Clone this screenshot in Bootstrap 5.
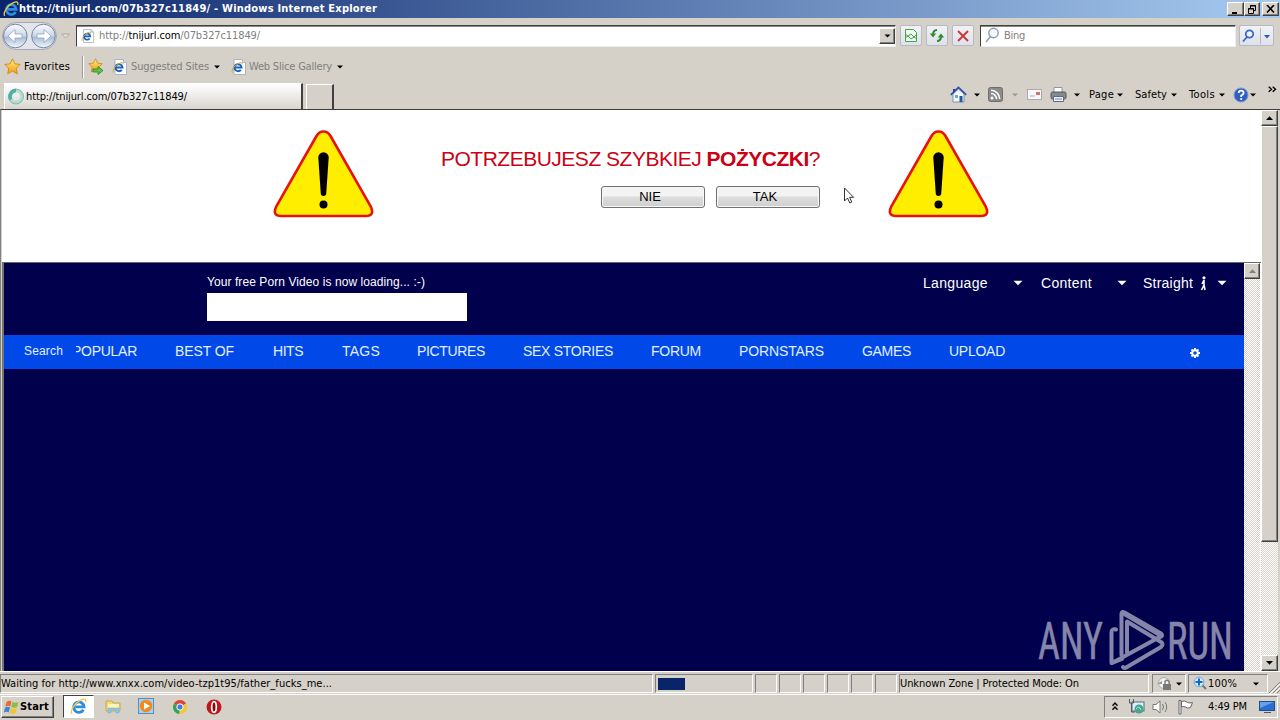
<!DOCTYPE html>
<html lang="en">
<head>
<meta charset="utf-8">
<title>Windows Internet Explorer</title>
<link href="https://cdn.jsdelivr.net/npm/bootstrap@5.3.0/dist/css/bootstrap.min.css" rel="stylesheet">
<style>
:root{--face:#d5d0c8;--dark:#808080;--navy:#00004c}
body{width:1280px;height:720px;overflow:hidden;background:var(--face);font:11px/14px "DejaVu Sans Condensed","DejaVu Sans",sans-serif;font-stretch:condensed;color:#000}
svg{display:block;flex:none}
.strip{display:grid;align-items:center;white-space:nowrap}
.strip>*{min-width:0}
.fit{white-space:nowrap;display:inline-block;justify-self:start}
.titlebar{height:18px;background:linear-gradient(90deg,#0a246a,#a6caf0);grid-template-columns:3px 16px 1208px 17px 16px 2px 17px;color:#fff;font-weight:700}
.raised{background:var(--face);border:1px solid;border-color:#fff #404040 #404040 #fff;box-shadow:inset -1px -1px 0 var(--dark)}
.sunk{border:1px solid;border-color:var(--dark) #fff #fff var(--dark)}
.winbtn{height:14px;display:flex;align-items:center;justify-content:center}
.address{height:35px;grid-template-columns:2px 55px 4px 10px 5px 820px 4px 22px 4px 22px 4px 22px 6px 256px 3px 35px}
.field{height:22px;background:#fff;border:1px solid;border-color:#404040 #eee #eee #404040;box-shadow:inset 0 1px #888}
.drop{width:16px}
.toolbtn{height:21px;border:1px solid #b5bac6;border-radius:2px;background:linear-gradient(#f1f2f6,#dfe1ea);display:flex;align-items:center;justify-content:center}
.grey{color:#808080}
.favs{height:27px;grid-template-columns:4px 20px 58px 6px 16px 8px 19px 83px 17px 18px 88px 14px}
.tabs-row{height:29px;grid-template-columns:4px 299px 3px 28px 616px 17px 7px 8px 6px 15px 9px 6px 9px 15px 8px 17px 7px 8px 7px 191px}
.tab-on{height:26px;align-self:end;background:linear-gradient(#fff,#d9d5ce);border:1px solid #fff;border-right:2px solid #404040;border-bottom:0;padding:0 3px}
.tab-on svg{margin-right:1px}
.tab-new{height:25px;align-self:end;border:1px solid #fff;border-right:2px solid #404040;border-bottom:0}
.commands{display:grid;grid-template-columns:28px 18px 36px 18px 30px 14px 17px 18px 10px;align-items:center}
.more{align-self:start;margin-top:-1px}
.viewport{height:562px;border-left:1px solid var(--dark);border-top:1px solid #3f3d39;padding-left:1px}
.banner{height:152px;padding:20px 0 0 271px}
.ask{width:380px;margin:19px 67px 0 67px}
.ask h1{font:21px/24px "Liberation Sans",Arial,sans-serif;color:#cc0013;height:24px;margin:-2px 0 15px;white-space:nowrap}
.answers{gap:11px;margin-right:1px}
.answer{width:104px;height:22px;border:1px solid #707070;border-radius:3px;background:linear-gradient(#f3f3f3 0 45%,#dddddd 50%,#cfcfcf);box-shadow:inset 0 0 0 1px #f7f7f7;font:13px/20px "Liberation Sans",Arial,sans-serif;color:#000;text-align:center;padding:0 6px 0 0}
.frame{height:409px;border-top:1px solid #69696c;border-left:2px solid #747474;background:#fff;font-family:"Liberation Sans",Arial,sans-serif;color:#fff}
.site{width:1240px;height:408px;background:var(--navy);font-size:14px;line-height:18px}
.site-head{height:72px}
.site-head .load{margin-left:203px;width:260px;padding-top:10px;font-size:12px}
.input-box{height:28px;margin-top:2px;background:#fff}
.prefs{margin-left:456px;padding-top:11px;display:grid;grid-template-columns:90px 28px 76px 26px 57px 17px 12px;height:29px;align-items:center;white-space:nowrap}
.site-nav{height:34px;padding-bottom:2px;background:#0049e8;display:grid;align-items:center;grid-template-columns:20px 52px 99px 98px 69px 75px 106px 128px 88px 123px 87px 241px 12px;white-space:nowrap;color:#e2f0ff}
.site-nav svg{margin-top:3px}
.site-nav .small-label{font-size:12px}
.clip{overflow:hidden}.clip .fit{margin-left:-4px}
.track{width:16px;background:repeating-conic-gradient(#fff 0 25%,#d8d4cd 0 50%) 0 0/2px 2px}
.outer-track{width:17px}
.sbtn{height:16px;display:flex;align-items:center;justify-content:center}
.thumb{height:416px}
.edge{width:2px}
.status{height:23px;border-top:1px solid #fff;padding-top:2px;grid-template-columns:653px 2px 98px 2px 22px 2px 22px 2px 22px 2px 22px 2px 22px 2px 22px 2px 250px 3px 34px 2px 80px 12px;align-items:start}
.status .sunk{height:19px;display:flex;align-items:center}
.block{width:27px;height:12px;background:#0a246a;margin-left:2px}
.taskbar{height:26px;border-top:1px solid #fff;padding-bottom:2px;grid-template-columns:1px 53px 9px 31px 11px 17px 16px 17px 17px 17px 17px 17px 881px 174px}
.start{height:22px;display:flex;align-items:center;font-weight:700;padding-left:2px}
.active-app{height:23px;background:#fff;border:1px solid;border-color:#404040 #fff #fff #404040;display:flex;align-items:center;justify-content:center}
.tray{height:22px;display:grid;align-items:center;grid-template-columns:7px 16px 24px 25px 31px 51px 18px}
.pointer{position:absolute;left:843px;top:187px}
.watermark{position:absolute;left:1036px;top:607px}
</style>
</head>
<body>
<svg width="0" height="0" class="position-absolute">
 <defs>
  <linearGradient id="orb" x2="0" y2="1"><stop stop-color="#fafcff"/><stop offset=".5" stop-color="#cbd6e8"/><stop offset=".55" stop-color="#a9bcd6"/><stop offset="1" stop-color="#f1f8ff"/></linearGradient>
  <linearGradient id="gold" x2="0" y2="1"><stop stop-color="#fff08a"/><stop offset="1" stop-color="#f09a10"/></linearGradient>
  <symbol id="e" viewBox="0 0 16 16"><path d="M12.600 11A4.900 4.900 0 1 1 13.200 8.300H5" fill="none" stroke="#2f8de0" stroke-width="2.700"/><path d="M1.700 14.800C-.5 12 5 4 10.500 1.700C14 .2 15.500 1 14.600 4" fill="none" stroke="#f3c944" stroke-width="1.300"/></symbol>
  <symbol id="pg" viewBox="0 0 16 16"><path d="M3 .5h8.500l3 3v12H3z" fill="#fff" stroke="#a8b4c8"/><path d="M11.500.5v3h3" fill="#dce6f4" stroke="#a8b4c8"/><path d="M9.800 10.800a3.500 3.500 0 1 1 .7-2.300H3.500" fill="none" stroke="#1b62bd" stroke-width="2"/><path d="M1.200 13.500C.2 11 4 5.500 9 3.800c2-.5 2.500.2 2 1.600" fill="none" stroke="#dca72a"/></symbol>
  <symbol id="star" viewBox="0 0 16 16"><path d="M8 .8l2.200 4.700 5.100.6-3.800 3.500 1 5.300L8 12.300l-4.500 2.600 1-5.300L.7 6.100l5.100-.6z" fill="url(#gold)" stroke="#d98a12" stroke-width=".9"/></symbol>
  <symbol id="dn" viewBox="0 0 6 4"><path d="M0 .5h6L3 3.500z"/></symbol>
  <symbol id="warn" viewBox="0 0 100 88"><path d="M50 1.500q4.500 0 7 4.500l40 70q5 10-5 10H8q-10 0-5-10L43 6q2.500-4.500 7-4.500z" fill="#fe0" stroke="#e8120c" stroke-width="2.600"/><path d="M44.800 27.500a5.200 5.200 0 0 1 10.400 0L52.700 64q-.2 2-2.700 2t-2.700-2z"/><circle cx="50" cy="74.500" r="4"/></symbol>
 </defs>
</svg>

<header class="strip titlebar"><i></i><svg width="16" height="16"><use href="#e"/></svg><span><span class="fit" data-w="358">http://tnijurl.com/07b327c11849/ - Windows Internet Explorer</span></span>
 <b class="raised winbtn"><svg width="9" height="9"><path d="M1 7h5v2H1z"/></svg></b>
 <b class="raised winbtn"><svg width="10" height="9" fill="none" stroke="#000"><path d="M3.500 3V.5h5v5H6.500M3 1h6M1.500 3.500h5v5h-5zM1 4h6"/></svg></b><i></i>
 <b class="raised winbtn"><svg width="9" height="8" stroke="#000" stroke-width="1.600"><path d="M1 0l7 7.500M8 0L1 7.500"/></svg></b>
</header>

<section class="strip address"><i></i>
 <svg width="55" height="28"><rect x=".5" y=".5" width="54" height="27" rx="13.500" fill="#e4e4ec" stroke="#a7a7b7"/><g stroke="#76859d"><circle cx="13.300" cy="14" r="11.800" fill="url(#orb)"/><circle cx="41.500" cy="14" r="11.800" fill="url(#orb)"/></g><g fill="#fff" stroke="#8fa3c0" stroke-width=".8"><path d="M6 14l7-6.500V12h7v4h-7v4.500z"/><path d="M49 14l-7-6.500V12h-7v4h7v4.500z"/></g></svg><i></i>
 <svg width="9" height="6"><path d="M.5 1h8l-4 4z" fill="#e5e2dc" stroke="#aaa6a0"/></svg><i></i>
 <div class="field d-flex align-items-center ps-1"><svg width="14" height="16"><use href="#pg"/></svg><span class="fit grey ms-1" data-w="161">http://<span class="text-black">tnijurl.com</span>/07b327c11849/</span><span class="raised ms-auto sbtn drop"><svg width="7" height="4"><use href="#dn"/></svg></span></div><i></i>
 <span class="toolbtn"><svg width="14" height="15" fill="#eefaee" stroke="#49a04c"><path d="M1.500 1.500h8l3 3v9h-11z"/><path d="M1 6l3 2 3-2 3 3 3-3M1 10l3-2 3 3 3-2 3 2" fill="none"/></svg></span><i></i>
 <span class="toolbtn"><svg width="16" height="14" fill="none" stroke="#2f8a30" stroke-width="2"><path d="M8 1Q4 1 4 6M8 12q4 0 4-5"/><path d="M.8 4.500h6.400L4 8.500zM8.800 8.500h6.400L12 4.500z" fill="#2f8a30" stroke="none"/></svg></span><i></i>
 <span class="toolbtn"><svg width="12" height="12" stroke="#c93c3c" stroke-width="2"><path d="M1 1l10 10M11 1L1 11"/></svg></span><i></i>
 <div class="field d-flex align-items-center ps-1"><svg width="15" height="17" fill="#f4f8fc" stroke="#8c9bad" stroke-width="1.400"><path d="M5.500 9.500L1 15"/><circle cx="8.500" cy="6" r="4.700"/></svg><span class="fit grey ms-1" data-w="21">Bing</span></div><i></i>
 <span class="toolbtn justify-content-start"><svg width="32" height="16"><g fill="#eef4ff" stroke="#3567c8" stroke-width="1.800"><path d="M7 9l-4 4.500"/><circle cx="9.500" cy="6" r="3.700"/></g><path d="M20.500-2v20" stroke="#b5bac6"/><path d="M24 7h6l-3 3.500z" fill="#2a5ab0"/></svg></span>
</section>

<section class="strip favs"><i></i><svg width="17" height="17"><use href="#star"/></svg><span><span class="fit" data-w="46">Favorites</span></span>
 <svg width="4" height="22"><path d="M.5 0v22" stroke="#999"/><path d="M1.500 0v22" stroke="#fff"/></svg>
 <svg width="17" height="17"><use href="#star" width="15" height="15"/><path d="M5 11h5V8.500l5 4-5 4V14H5z" fill="#5cc33f" stroke="#26852a" stroke-width=".8"/></svg><i></i>
 <svg width="16" height="16"><use href="#pg"/></svg><span class="grey"><span class="fit" data-w="78">Suggested Sites</span></span><svg width="6" height="4"><use href="#dn"/></svg><svg width="16" height="16"><use href="#pg"/></svg><span class="grey"><span class="fit" data-w="83">Web Slice Gallery</span></span><svg width="6" height="4"><use href="#dn"/></svg>
</section>

<section class="strip tabs-row"><i></i>
 <div class="tab-on d-flex align-items-center"><svg width="17" height="17" fill="none" stroke-width="3.500"><circle cx="8" cy="8.500" r="6" stroke="#b2ddd5"/><path d="M8 2.500a6 6 0 0 0-5 9" stroke="#49b3a2"/><circle cx="8" cy="8.500" r="7.500" stroke="#5f9e97" stroke-width=".6"/></svg><span class="fit" data-w="161">http://tnijurl.com/07b327c11849/</span></div><i></i>
 <div class="tab-new"></div><i></i>
 <svg width="17" height="17"><path d="M3 3h2v3H3z" fill="#253d8f"/><path d="M3 8l5.500-5L14 8v8H3z" fill="#f4f8ff" stroke="#7a90bb"/><path d="M.8 8.800L8.500 1.500l7.700 7.300" fill="none" stroke="#304fa8" stroke-width="1.700"/><path d="M5 9h3v3H5z" fill="#62aada"/><path d="M9.500 10h3v6h-3z" fill="#285a91"/></svg><i></i><svg width="6" height="4"><use href="#dn"/></svg><i></i>
 <svg width="15" height="15"><rect x=".5" y=".5" width="14" height="14" rx="2" fill="#8b8b8b" stroke="#6d6d6d"/><circle cx="4" cy="11" r="1.500" fill="#fff"/><path d="M3 6.500a5.500 5.500 0 0 1 5.500 5.500M3 3.300A8.700 8.700 0 0 1 11.700 12" fill="none" stroke="#fff" stroke-width="1.500"/></svg><i></i><svg width="6" height="4" fill="#999"><use href="#dn"/></svg><i></i>
 <svg width="15" height="12"><rect x=".5" y=".5" width="14" height="10" fill="#f8f8fc" stroke="#aaa"/><path d="M9 3h4v3H9z" fill="#c76"/><path d="M3 7h5" stroke="#aab"/></svg><i></i>
 <svg width="17" height="16"><path d="M4 5V.5h8V5" fill="#fff" stroke="#8a96a9"/><rect x="1" y="5" width="15" height="7" rx="1.500" fill="#84898f" stroke="#54585f"/><path d="M3.500 9.500h10v5h-10z" fill="#eef4fc" stroke="#667"/><path d="M5 12h7" stroke="#5889cf"/></svg><i></i><svg width="6" height="4"><use href="#dn"/></svg><i></i>
 <div class="commands"><span class="fit" data-w="25">Page</span><svg width="6" height="4"><use href="#dn"/></svg><span class="fit" data-w="32">Safety</span><svg width="6" height="4"><use href="#dn"/></svg><span class="fit" data-w="26">Tools</span><svg width="6" height="4"><use href="#dn"/></svg><svg width="16" height="16"><circle cx="8" cy="8" r="7" fill="#2f5fc0" stroke="#8199ce"/><path d="M5.500 6Q6 3.500 8.200 3.600T10.700 6Q10.500 7.300 8.200 8.500V10" fill="none" stroke="#fff" stroke-width="1.700"/><circle cx="8.200" cy="12" r="1.100" fill="#fff"/></svg><svg width="6" height="4"><use href="#dn"/></svg><svg class="more" width="9" height="7" fill="none" stroke="#000" stroke-width="1.400"><path d="M.7.7l2.800 2.500L.7 5.700M4.700.7l2.800 2.500-2.800 2.500"/></svg></div>
</section>

<main class="viewport d-flex">
 <div class="bg-white flex-grow-1">
  <section class="banner d-flex align-items-start">
   <svg width="101" height="88"><use href="#warn"/></svg>
   <div class="ask"><h1><span class="fit" data-w="379">POTRZEBUJESZ SZYBKIEJ <b>POŻYCZKI</b>?</span></h1><div class="answers d-flex justify-content-end"><button class="answer">NIE</button><button class="answer">TAK</button></div></div>
   <svg width="101" height="88"><use href="#warn"/></svg>
  </section>
  <section class="frame d-flex">
   <div class="site">
    <div class="site-head d-flex"><div class="load"><span class="fit" data-w="218">Your free Porn Video is now loading... :-)</span><div class="input-box"></div></div>
     <div class="prefs"><span class="fit" data-w="65">Language</span><svg width="10" height="6" fill="#fff"><use href="#dn"/></svg><span class="fit" data-w="51">Content</span><svg width="10" height="6" fill="#fff"><use href="#dn"/></svg><span class="fit" data-w="50">Straight</span><svg width="7" height="15" fill="none" stroke="#fff" stroke-width="1.600"><path d="M4 4v5L1.500 14M4 9l1 5M4 4L2 8"/><circle cx="4" cy="1.800" r=".8"/></svg><svg width="10" height="6" fill="#fff"><use href="#dn"/></svg></div></div>
    <nav class="site-nav"><i></i><span class="small-label"><span class="fit" data-w="39">Search</span></span><span class="clip"><span class="fit" data-w="65">POPULAR</span></span><span class="fit" data-w="59">BEST OF</span><span class="fit" data-w="30">HITS</span><span class="fit" data-w="38">TAGS</span><span class="fit" data-w="68">PICTURES</span><span class="fit" data-w="90">SEX STORIES</span><span class="fit" data-w="50">FORUM</span><span class="fit" data-w="85">PORNSTARS</span><span class="fit" data-w="49">GAMES</span><span class="fit" data-w="56">UPLOAD</span>
     <svg width="10" height="10" fill="none" stroke="#fff"><circle cx="5" cy="5" r="2.800" stroke-width="2"/><path d="M5 0v2M5 8v2M0 5h2M8 5h2M1.500 1.500l1.200 1.200M7.300 7.300l1.200 1.200M8.500 1.500L7.300 2.700M2.700 7.300L1.500 8.500" stroke-width="1.800"/></svg></nav>
   </div>
   <div class="track"><div class="raised sbtn"><svg width="7" height="4" fill="#808080"><path d="M0 4h7L3.500.3z"/></svg></div></div>
  </section>
 </div>
 <div class="track outer-track d-flex flex-column"><div class="raised sbtn"><svg width="7" height="4"><path d="M0 4h7L3.500.3z"/></svg></div><div class="raised thumb"></div><div class="raised sbtn mt-auto"><svg width="7" height="4"><path d="M0 0h7L3.500 3.700z"/></svg></div></div>
 <i class="edge"></i>
</main>

<section class="strip status">
 <div class="sunk"><span class="fit" data-w="331">Waiting for http://www.xnxx.com/video-tzp1t95/father_fucks_me...</span></div><i></i>
 <div class="sunk"><span class="block"></span></div><i></i><div class="sunk"></div><i></i><div class="sunk"></div><i></i><div class="sunk"></div><i></i><div class="sunk"></div><i></i><div class="sunk"></div><i></i><div class="sunk"></div><i></i>
 <div class="sunk"><span class="fit" data-w="179">Unknown Zone | Protected Mode: On</span></div><i></i>
 <div class="sunk ps-1"><svg width="15" height="15"><circle cx="7" cy="7" r="5.500" fill="#f0f0f0" stroke="#aaa"/><path d="M0 8l5-3v3z" fill="#999"/><rect x="6" y="8" width="8" height="6" fill="#777"/><path d="M8 8V5.500q2-2.500 4 0V8" fill="none" stroke="#777" stroke-width="1.300"/></svg><svg class="ms-1" width="6" height="4"><use href="#dn"/></svg></div><i></i>
 <div class="sunk ps-1"><svg width="15" height="15"><path d="M8 8l5 5" stroke="#777" stroke-width="2"/><circle cx="6" cy="6" r="4.800" fill="#d6eaff" stroke="#75a8db"/><path d="M6 2.500v7M2.500 6h7" stroke="#1769c9" stroke-width="2"/></svg><span class="fit" data-w="29">100%</span><svg class="ms-3" width="6" height="4"><use href="#dn"/></svg></div>
 <svg width="12" height="20" stroke="#888"><path d="M1 19L12 8M5 19l7-7M9 19l3-3"/><path d="M2 20L12 10M6 20l6-6" stroke="#fff"/></svg>
</section>

<footer class="strip taskbar"><i></i>
 <div class="raised start"><svg width="16" height="16"><path d="M2.500 3Q5 1 7.500 2.500L6.300 7.500Q4 6 1.200 7.700z" fill="#e66a32"/><path d="M8.500 3Q11 4.500 14.500 3l-1.300 5Q10 9.300 7.300 8z" fill="#8ac03f"/><path d="M1 8.700Q3.500 7 6 8.500L4.700 13.500Q2.500 12-.2 13.500z" fill="#3d83d4"/><path d="M7 9q2.500 1.400 6 0l-1.300 5Q8.500 15.500 5.700 14z" fill="#f4c332"/></svg><span class="fit" data-w="29">Start</span></div><i></i>
 <div class="active-app"><svg width="17" height="17"><use href="#e"/></svg></div><i></i>
 <svg width="17" height="17"><path d="M1 3h6l1 2h7v8H1z" fill="#f4d779" stroke="#c9a750"/><path d="M3 6h11v4H3z" fill="#fff3b5"/><path d="M3 15v-5h11v5h-3v-3H6v3z" fill="#8ec6e8" stroke="#70a8c8" stroke-width=".5"/></svg><i></i>
 <svg width="17" height="17"><rect x=".5" y=".5" width="15" height="15" fill="#aad0ee" stroke="#4f8fc8"/><circle cx="8" cy="8" r="6.200" fill="#f2891b"/><path d="M6 4.500L12 8l-6 3.500z" fill="#fff"/></svg><i></i>
 <svg width="16" height="16" viewBox="0 0 16 16"><path d="M8 8L1.900 4.500A7 7 0 0 1 14.100 4.500z" fill="#df4336"/><path d="M8 8L1.900 4.500A7 7 0 0 0 7.500 15z" fill="#35a452"/><path d="M8 8l6.100-3.500A7 7 0 0 1 7.500 15z" fill="#fac72a"/><circle cx="8" cy="8" r="3.200" fill="#3d7ee8" stroke="#fff"/></svg><i></i>
 <svg width="16" height="16"><circle cx="8" cy="8" r="7.500" fill="#c3141d"/><ellipse cx="8" cy="8" rx="2.300" ry="5.300" fill="#8b0710" stroke="#fff" stroke-width="1.700"/></svg><i></i>
 <div class="sunk tray"><i></i><svg width="6" height="9" fill="none" stroke="#000" stroke-width="1.300"><path d="M.5 3.700L3 1l2.500 2.700M.5 7.700L3 5l2.500 2.700"/></svg>
  <svg width="17" height="17"><rect x="4" y="4" width="12" height="9" fill="#dcefff" stroke="#596d78"/><circle cx="11" cy="11" r="4.500" fill="#47a592"/><path d="M8 11q3-4 5 1" stroke="#bde8cb" fill="none"/><path d="M1.500 1v4h4V1M3.500 5v9H7" fill="none" stroke="#555"/></svg>
  <svg width="18" height="16" fill="#fff" stroke="#777"><path d="M1 5.500h3L8 2v12l-4-3.500H1z"/><path d="M10.500 5q2 3 0 6M13 3q3.500 5 0 10" fill="none"/></svg>
  <svg width="18" height="16" fill="#fff" stroke="#666"><path d="M2 15V1.500h2V15zM4.500 2.500q3-1.500 6 1 2 1 5 0l-2 5q-3 1.500-5-.5-2-1-4 0z"/></svg>
  <span class="fit" data-w="39">4:49 PM</span><svg width="16" height="15"><rect x=".5" y="2.500" width="15" height="9" fill="#286fd1" stroke="#234d8b"/><path d="M1 3h14L1 9z" fill="#65a2ed"/><path d="M5 13.500h7" stroke="#555"/></svg></div>
</footer>

<svg class="pointer" width="13" height="18" fill="#fff" stroke="#333"><path d="M1.500 1v13l3-3 2.300 5 2-1-2.200-4.700h4z"/></svg>
<svg class="watermark" width="204" height="64" fill="#8585a9"><g font-family="Roboto, sans-serif" font-size="51" stroke="#8585a9" stroke-width=".5"><text x="2" y="52" textLength="65" lengthAdjust="spacingAndGlyphs">ANY</text><text x="131" y="52" textLength="66" lengthAdjust="spacingAndGlyphs">RUN</text></g><g fill="none" stroke="#8585a9" stroke-width="4" stroke-linejoin="round" stroke-linecap="round"><path d="M80 22.500q-4.500-1-4.500 2.500v31l7-3.500 43-23.500-38-22.500"/><path d="M85.500 48V7q0-3 3-1.500L125 26.500q2 2 0 3M76 56l10-4M87 60q1 2 4 0l34-20q3-3 0-5L91 14.500v31"/></g></svg>

<script src="https://cdn.jsdelivr.net/npm/bootstrap@5.3.0/dist/js/bootstrap.bundle.min.js"></script>
<script>
document.querySelectorAll('.fit').forEach(el => {
  const gap = (el.dataset.w - el.getBoundingClientRect().width) / el.textContent.length;
  el.style.letterSpacing = gap + 'px';
});
</script>
</body>
</html>
